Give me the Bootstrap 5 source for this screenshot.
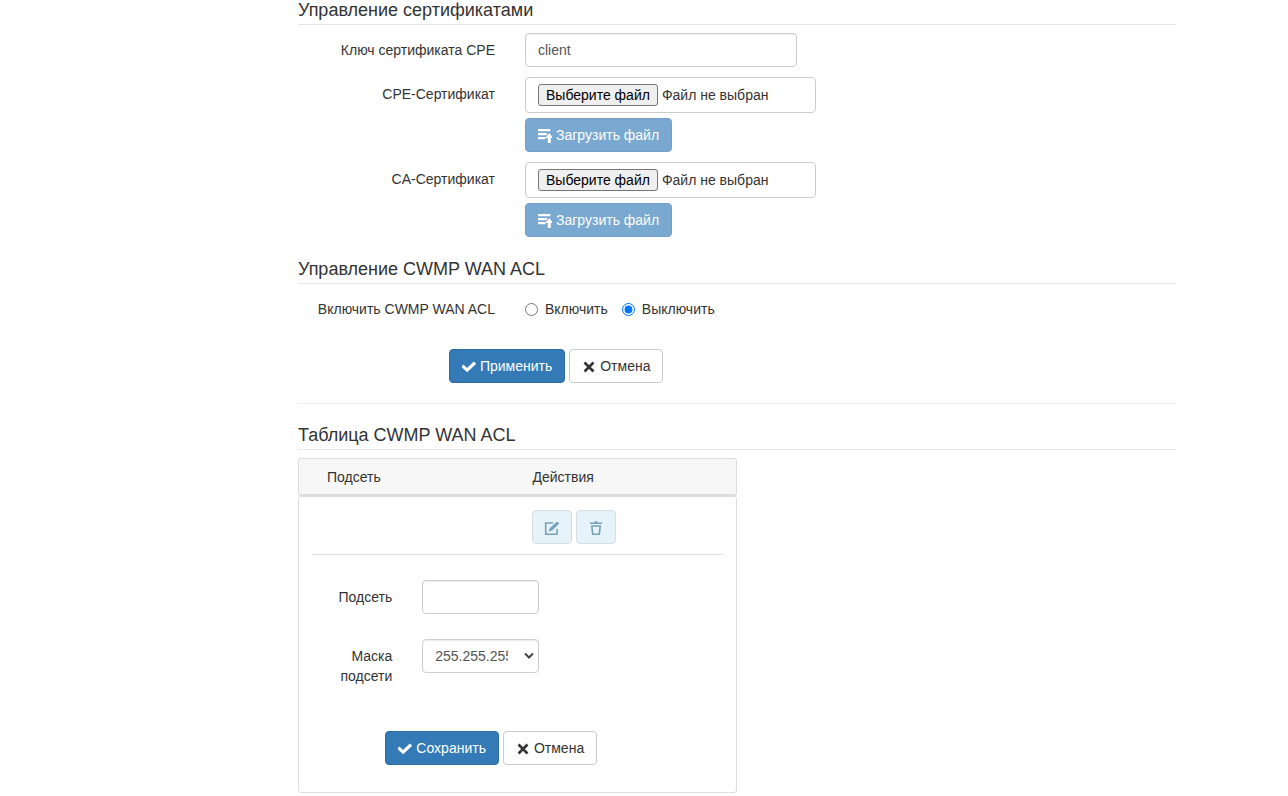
<!DOCTYPE html>
<html lang="ru">
<head>
<meta charset="utf-8">
<meta name="viewport" content="width=device-width, initial-scale=1">
<title>CWMP</title>
<link href="https://cdn.jsdelivr.net/npm/bootstrap@5.3.0/dist/css/bootstrap.min.css" rel="stylesheet">
<style>
body { font-family: "Liberation Sans", Arial, sans-serif; font-size: 14px; line-height: 20px; color: #333; }
.page { padding-left: 298px; padding-right: 112px; }
.row { --bs-gutter-x: 30px; }
.section-title { font-size: 18px; line-height: 20px; font-weight: 400; color: #333; padding-bottom: 4px; margin: 0 0 8px; border-bottom: 1px solid #e5e5e5; }
.section-gap { margin-top: 22px; }
.field-row { margin-bottom: 10px; }
.field-label { text-align: right; padding-top: 7px; }
.form-control, .form-select { font-size: 14px; line-height: 20px; padding: 6px 12px; height: 34px; border: 1px solid #ccc; border-radius: 4px; color: #555; box-shadow: inset 0 1px 1px rgba(0,0,0,.075); }
.form-select { padding-right: 30px; text-overflow: clip; background-image: url("data:image/svg+xml,%3csvg xmlns='http://www.w3.org/2000/svg' viewBox='0 0 10 8'%3e%3cpath d='M1 1.500 5 5.500 9 1.500' fill='none' stroke='%23444' stroke-width='2'/%3e%3c/svg%3e"); background-size: 10px 8px; background-position: right 4px center; }
.key-input { max-width: 272px; }
.file-box { max-width: 291px; height: 36px; color: #333; box-shadow: none; }
.file-pick { font-size: 14px; line-height: 20px; color: #000; background: #efefef; border: 1px solid #767676; border-radius: 3px; padding: 0 7px; margin-right: 4px; }
.btn { font-size: 14px; line-height: 20px; padding: 6px 12px; border-radius: 4px; display: inline-flex; align-items: center; gap: 4px; }
.btn svg { width: 14px; height: 14px; flex: none; margin-top: 2px; overflow: visible; }
.btn-main { --bs-btn-color: #fff; --bs-btn-bg: #337ab7; --bs-btn-border-color: #2e6da4; --bs-btn-hover-color: #fff; --bs-btn-hover-bg: #286090; --bs-btn-disabled-color: #fff; --bs-btn-disabled-bg: #337ab7; --bs-btn-disabled-border-color: #2e6da4; }
.btn-plain { --bs-btn-color: #333; --bs-btn-bg: #fff; --bs-btn-border-color: #ccc; --bs-btn-hover-bg: #e6e6e6; --bs-btn-hover-border-color: #adadad; }
.btn-tool { width: 40px; height: 34px; justify-content: center; --bs-btn-disabled-color: #76a3b9; --bs-btn-disabled-bg: #e6f3fb; --bs-btn-disabled-border-color: #d9dde0; --bs-btn-disabled-opacity: 1; }
.btn-tool svg { width: 16px; height: 16px; }
.upload { margin-top: 5px; }
.choices { padding-top: 7px; gap: 14px; }
.choices label { display: flex; align-items: center; gap: 7px; }
.choices input { width: 13px; height: 13px; margin: 0; accent-color: #0075ff; }
.form-actions { width: 62%; margin-left: -14px; padding-top: 20px; }
.divider { height: 0; margin: 20px 0 21px; border-top: 1px solid #eee; }
.acl { width: 50%; }
.acl-head { background: #f7f7f7; border: 1px solid #ddd; border-bottom-width: 2px; border-radius: 3px; padding: 8px 13px 7px; }
.acl-head, .acl-body { margin: 0; }
.acl-body { border: 1px solid #ddd; border-radius: 3px; padding-bottom: 27px; }
.acl-item { margin: 0 13px; padding: 13px 0 10px; border-bottom: 1px solid #e0e0e0; }
.pad-x { padding: 0 15px; }
.acl-tools { padding-left: 14px; }
.acl-form { padding-top: 25px; }
.acl-form .row { margin: 0 -2px 25px; }
.acl-actions { width: 88%; padding-top: 20px; }
</style>
</head>
<body>
<svg class="d-none" aria-hidden="true">
  <symbol id="i-check" viewBox="0 0 14 14"><path d="M-.8 6.800 1.300 4.600 5 7.900 11.800 1.500 14.200 3.700 5.200 12.200z" fill="currentColor"/></symbol>
  <symbol id="i-x" viewBox="0 0 14 14"><path d="M2.500 2.500 11.500 11.500M11.500 2.500 2.500 11.500" stroke="currentColor" stroke-width="2.600"/></symbol>
  <symbol id="i-upload" viewBox="0 0 14 14"><path d="M0 1.200h11.500M0 5.200h8M0 9.200h6.500" stroke="currentColor" stroke-width="2.200" stroke-linecap="round"/><path d="M11.300 4 15.300 9h-2.500v5h-3V9H7.300z" fill="currentColor"/></symbol>
  <symbol id="i-edit" viewBox="0 0 16 16"><path d="M9 3H1.700v11.300H13V9" fill="none" stroke="currentColor" stroke-width="1.600"/><path d="M4.500 11.500 6 8 13 1.500 15.300 3.500 8.200 10.500z" fill="currentColor"/></symbol>
  <symbol id="i-trash" viewBox="0 0 16 16"><path d="M2 3.300h12M6.500 2h3M3.800 6 4.700 14.300h6.600L12.200 6z" fill="none" stroke="currentColor" stroke-width="1.600"/></symbol>
</svg>
<main class="page">
  <form>
    <h2 class="section-title">Управление сертификатами</h2>
    <div class="row field-row">
      <label class="col-3 field-label" for="key">Ключ сертификата CPE</label>
      <div class="col-9"><input class="form-control key-input" id="key" type="text" value="client"></div>
    </div>
    <div class="row field-row">
      <label class="col-3 field-label" for="cpe">CPE-Сертификат</label>
      <div class="col-9">
        <div class="form-control file-box position-relative d-flex align-items-center">
          <span class="file-pick">Выберите файл</span><span>Файл не выбран</span>
          <input class="position-absolute top-0 start-0 w-100 h-100 opacity-0" id="cpe" type="file">
        </div>
        <button class="btn btn-main upload" type="button" disabled><svg><use href="#i-upload"/></svg>Загрузить файл</button>
      </div>
    </div>
    <div class="row">
      <label class="col-3 field-label" for="ca">CA-Сертификат</label>
      <div class="col-9">
        <div class="form-control file-box position-relative d-flex align-items-center">
          <span class="file-pick">Выберите файл</span><span>Файл не выбран</span>
          <input class="position-absolute top-0 start-0 w-100 h-100 opacity-0" id="ca" type="file">
        </div>
        <button class="btn btn-main upload" type="button" disabled><svg><use href="#i-upload"/></svg>Загрузить файл</button>
      </div>
    </div>

    <h2 class="section-title section-gap">Управление CWMP WAN ACL</h2>
    <div class="row field-row" role="radiogroup" aria-labelledby="acl-label">
      <div class="col-3 field-label" id="acl-label">Включить CWMP WAN ACL</div>
      <div class="col-9 d-flex choices">
        <label for="on"><input type="radio" name="acl" id="on">Включить</label>
        <label for="off"><input type="radio" name="acl" id="off" checked>Выключить</label>
      </div>
    </div>
    <div class="form-actions d-flex justify-content-center gap-1">
      <button class="btn btn-main" type="submit"><svg><use href="#i-check"/></svg>Применить</button>
      <button class="btn btn-plain" type="reset"><svg><use href="#i-x"/></svg>Отмена</button>
    </div>
  </form>
  <div class="divider"></div>

  <h2 class="section-title">Таблица CWMP WAN ACL</h2>
  <section class="acl">
    <div class="acl-head d-flex">
      <div class="w-50 pad-x">Подсеть</div>
      <div class="w-50 pad-x">Действия</div>
    </div>
    <div class="acl-body">
      <div class="acl-item d-flex">
        <div class="w-50"></div>
        <div class="w-50 acl-tools d-flex gap-1">
          <button class="btn btn-tool" type="button" disabled aria-label="Изменить"><svg><use href="#i-edit"/></svg></button>
          <button class="btn btn-tool" type="button" disabled aria-label="Удалить"><svg><use href="#i-trash"/></svg></button>
        </div>
      </div>
      <form class="acl-form">
        <div class="row">
          <label class="col-3 field-label" for="subnet">Подсеть</label>
          <div class="col-4"><input class="form-control" id="subnet" type="text"></div>
        </div>
        <div class="row">
          <label class="col-3 field-label" for="mask">Маска подсети</label>
          <div class="col-4"><select class="form-select" id="mask"><option>255.255.255.255</option><option>255.255.255.0</option></select></div>
        </div>
        <div class="acl-actions d-flex justify-content-center gap-1">
          <button class="btn btn-main" type="submit"><svg><use href="#i-check"/></svg>Сохранить</button>
          <button class="btn btn-plain" type="reset"><svg><use href="#i-x"/></svg>Отмена</button>
        </div>
      </form>
    </div>
  </section>
</main>
<script src="https://cdn.jsdelivr.net/npm/bootstrap@5.3.0/dist/js/bootstrap.bundle.min.js"></script>
</body>
</html>
